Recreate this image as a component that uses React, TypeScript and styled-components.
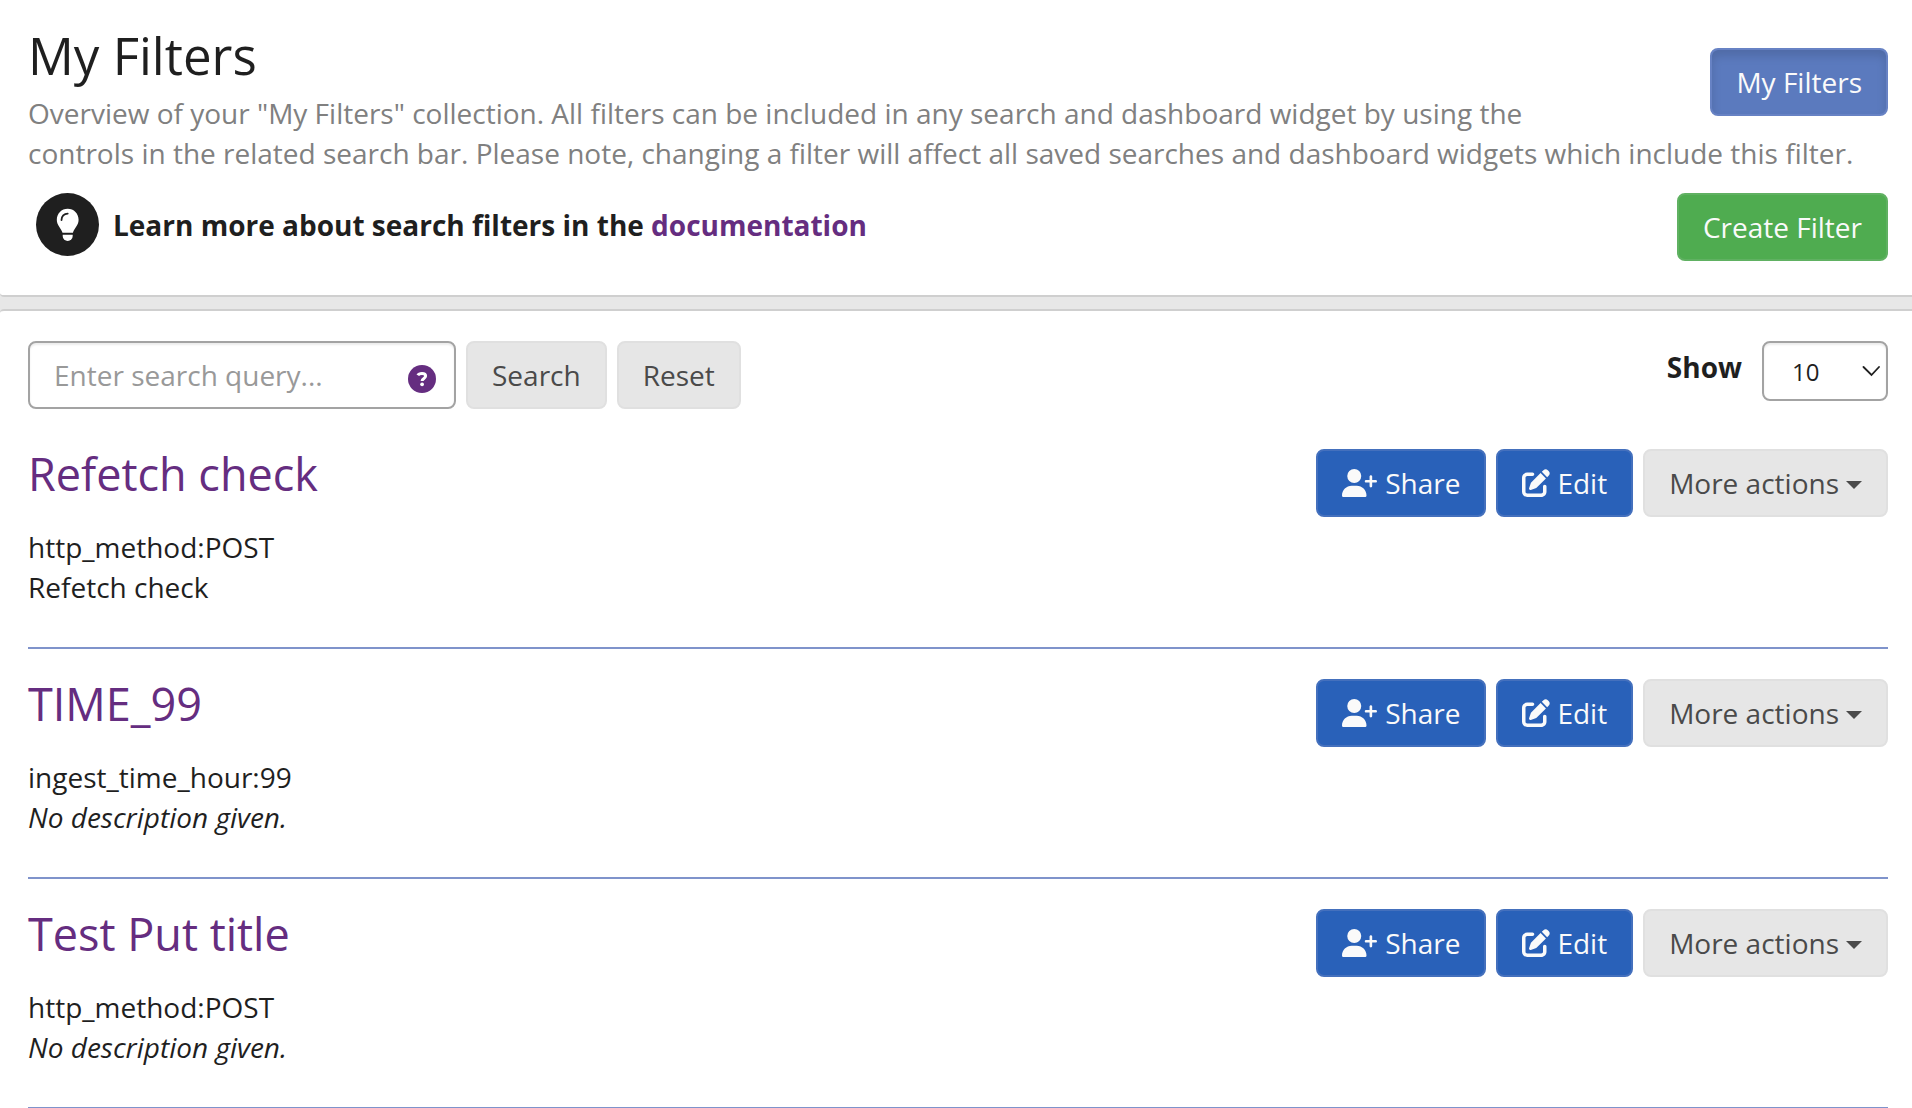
import React from 'react';
import styled, { createGlobalStyle, css } from 'styled-components';

const Global = createGlobalStyle`
  *, *::before, *::after { box-sizing: border-box; }
  body {
    margin: 0;
    background: #e7e7e7;
    color: #1f1f1f;
    font-family: "Open Sans", "Noto Sans", sans-serif;
    font-size: 28px;
    line-height: 40px;
    overflow: hidden;
  }
  button, input, select { font: inherit; margin: 0; }
`;

const Page = styled.main`
  display: flex;
  flex-direction: column;
  gap: 12px;
  min-height: 100vh;
`;

const Panel = styled.section<{ $first?: boolean }>`
  background: #fff;
  border: 2px solid #cfcfcf;
  border-width: ${(p) => (p.$first ? '0 0 2px' : '2px 0 0')};
  border-radius: ${(p) => (p.$first ? '0 0 0 4px' : '4px 0 0 0')};
  padding: ${(p) => (p.$first ? '28px 24px 34px 28px' : '30px 24px 0 28px')};
`;

const Corner = styled.div`
  float: right;
  padding-top: 20px;
`;

const PageTitle = styled.h1`
  margin: 0;
  font-size: 51px;
  font-weight: 400;
  line-height: 54px;
`;

const Lead = styled.p`
  margin: 11px 0 20px;
  color: #808080;
`;

const LearnRow = styled.div`
  display: flex;
  align-items: flex-start;
  justify-content: space-between;
`;

const Learn = styled.strong`
  display: flex;
  align-items: center;
  gap: 14px;
  padding-left: 8px;
  font-weight: 700;
`;

const Link = styled.a`
  color: #652d80;
  text-decoration: none;
`;

const tones = {
  gray: css`background: #e6e6e6; border-color: #e0e0e0; color: #4a4a4a;`,
  blue: css`background: #2961b9; border-color: #4470bd; color: #fafafa;`,
  green: css`background: #4fac50; border-color: #60b162; color: #fafafa;`,
  active: css`
    background: #5b7abe;
    border-color: #6782c4;
    color: #fafafa;
    box-shadow: inset 0 6px 10px rgba(0, 0, 0, 0.125);
  `,
};

const Button = styled.button<{ $tone: keyof typeof tones }>`
  display: inline-flex;
  align-items: center;
  gap: 7px;
  height: 68px;
  padding: 0 24px;
  border: 2px solid;
  border-radius: 8px;
  white-space: nowrap;
  cursor: pointer;
  ${(p) => tones[p.$tone]}
`;

const Toolbar = styled.div`
  display: flex;
  align-items: flex-start;
  justify-content: space-between;
`;

const SearchForm = styled.form`
  display: flex;
  gap: 10px;
`;

const SearchBox = styled.div`
  display: flex;
  align-items: center;
  width: 428px;
  height: 68px;
  padding: 0 18px 0 24px;
  border: 2px solid #a3a3a3;
  border-radius: 8px;
  background: #fff;
  box-shadow: inset 0 2px 2px rgba(0, 0, 0, 0.075);
`;

const SearchInput = styled.input`
  flex: 1;
  min-width: 0;
  padding: 0;
  border: 0;
  outline: 0;
  background: transparent;
  color: #1f1f1f;
  &::placeholder { color: #999; opacity: 1; }
`;

const HelpButton = styled.button`
  display: flex;
  padding: 8px 0 0;
  border: 0;
  background: none;
  cursor: pointer;
`;

const PageSize = styled.div`
  display: flex;
  align-items: flex-start;
  gap: 20px;
`;

const SizeLabel = styled.label`
  padding-top: 6px;
  font-weight: 700;
`;

const SelectBox = styled.div`
  display: grid;
  align-items: center;
  & > * { grid-area: 1 / 1; }
  & > svg { justify-self: end; margin-right: 8px; pointer-events: none; }
`;

const SizeSelect = styled.select`
  appearance: none;
  width: 126px;
  height: 60px;
  padding: 2px 28px 0;
  border: 2px solid #a3a3a3;
  border-radius: 8px;
  background: #fff;
  color: #1f1f1f;
  font-size: 24px;
  box-shadow: inset 0 2px 2px rgba(0, 0, 0, 0.075);
`;

const FilterList = styled.ul`
  margin: 10px 0 0;
  padding: 0;
  list-style: none;
`;

const FilterItem = styled.li`
  display: flex;
  align-items: flex-start;
  justify-content: space-between;
  padding: 30px 0 40px;
  border-bottom: 2px solid #7f93cb;
`;

const FilterTitle = styled.h2`
  margin: 0 0 28px;
  font-size: 45px;
  font-weight: 400;
  line-height: 50px;
`;

const Line = styled.div<{ $italic?: boolean }>`
  font-style: ${(p) => (p.$italic ? 'italic' : 'normal')};
`;

const Actions = styled.div`
  display: flex;
  gap: 10px;
`;

const Bulb = () => (
  <svg width="63" height="63" viewBox="0 0 63 63" aria-hidden="true">
    <circle cx="31.500" cy="31.500" r="31.500" fill="#1f1f1f" />
    <path fill="#fff" d="M31.700 15.700c-6.200 0-10.900 4.900-10.900 11 0 5.600 4.200 8.300 5.700 13h10.400c1.500-4.700 5.700-7.400 5.700-13 0-6.100-4.700-11-10.900-11z" />
    <path fill="#fff" d="M26.700 41.800h10v1.200a5 5 0 0 1-10 0z" />
    <path fill="none" stroke="#1f1f1f" strokeWidth="1.800" strokeLinecap="round" d="M25.500 27c0-3.600 2.600-6.400 6.200-6.400" />
  </svg>
);

const Help = () => (
  <svg width="28" height="28" viewBox="0 0 28 28" aria-hidden="true">
    <circle cx="14" cy="14" r="14" fill="#652d80" />
    <path
      fill="none"
      stroke="#fff"
      strokeWidth="3"
      strokeLinejoin="round"
      d="M9.800 10.200C10.600 8.800 12.200 8.400 14 8.400c2.200 0 3.600.9 3.600 2.700 0 2.400-3.500 2.300-3.500 5"
    />
    <circle cx="14.100" cy="19.300" r="1.900" fill="#fff" />
  </svg>
);

const UserPlus = () => (
  <svg width="36" height="28" viewBox="0 0 640 512" preserveAspectRatio="xMinYMid" aria-hidden="true">
    <path fill="currentColor" d="M96 128a128 128 0 1 1 256 0A128 128 0 1 1 96 128zM0 482.300C0 383.800 79.800 304 178.300 304h91.400C368.200 304 448 383.800 448 482.300c0 16.400-13.300 29.700-29.700 29.700H29.700C13.300 512 0 498.700 0 482.300zM504 312V248H440c-13.300 0-24-10.700-24-24s10.700-24 24-24h64V136c0-13.300 10.700-24 24-24s24 10.700 24 24v64h64c13.300 0 24 10.700 24 24s-10.700 24-24 24H552v64c0 13.300-10.700 24-24 24s-24-10.700-24-24z" />
  </svg>
);

const PenSquare = () => (
  <svg width="28" height="28" viewBox="0 0 512 512" aria-hidden="true">
    <path fill="currentColor" d="M471.600 21.700c-21.900-21.900-57.300-21.900-79.200 0L362.300 51.700l97.900 97.900 30.100-30.100c21.900-21.900 21.900-57.300 0-79.200L471.600 21.700zm-299.200 220c-6.100 6.100-10.800 13.600-13.500 21.900l-29.600 88.800c-2.900 8.600-.600 18.100 5.800 24.600s15.900 8.700 24.600 5.800l88.800-29.600c8.200-2.700 15.700-7.400 21.900-13.500L437.700 172.300 339.700 74.300 172.400 241.700zM96 64C43 64 0 107 0 160V416c0 53 43 96 96 96H352c53 0 96-43 96-96V320c0-17.700-14.300-32-32-32s-32 14.300-32 32v96c0 17.700-14.300 32-32 32H96c-17.700 0-32-14.300-32-32V160c0-17.700 14.300-32 32-32h96c17.700 0 32-14.300 32-32s-14.300-32-32-32H96z" />
  </svg>
);

const Caret = () => (
  <svg width="16" height="12" viewBox="0 0 16 12" aria-hidden="true">
    <path fill="currentColor" d="M0 4h16l-8 8z" />
  </svg>
);

const Chevron = () => (
  <svg width="18" height="12" viewBox="0 0 18 12" aria-hidden="true">
    <path fill="none" stroke="#1f1f1f" strokeWidth="1.800" strokeLinecap="round" d="M1.500 2L9.500 10 17 2" />
  </svg>
);

const filters = [
  { title: 'Refetch check', query: 'http_method:POST', description: 'Refetch check' },
  { title: 'TIME_99', query: 'ingest_time_hour:99', description: '' },
  { title: 'Test Put title', query: 'http_method:POST', description: '' },
];

export default function App() {
  return (
    <Page>
      <Global />
      <Panel $first>
        <Corner>
          <Button type="button" $tone="active">My Filters</Button>
        </Corner>
        <PageTitle>My Filters</PageTitle>
        <Lead>
          Overview of your "My Filters" collection. All filters can be included in any search and
          dashboard widget by using the
          <br />
          controls in the related search bar. Please note, changing a filter will affect all saved
          searches and dashboard widgets which include this filter.
        </Lead>
        <LearnRow>
          <Learn>
            <Bulb />
            <span>
              Learn more about search filters in the <Link href="#documentation">documentation</Link>
            </span>
          </Learn>
          <Button type="button" $tone="green">Create Filter</Button>
        </LearnRow>
      </Panel>
      <Panel>
        <Toolbar>
          <SearchForm onSubmit={(e) => e.preventDefault()}>
            <SearchBox>
              <SearchInput type="text" aria-label="Search query" placeholder="Enter search query..." />
              <HelpButton type="button" aria-label="Search syntax help">
                <Help />
              </HelpButton>
            </SearchBox>
            <Button type="submit" $tone="gray">Search</Button>
            <Button type="reset" $tone="gray">Reset</Button>
          </SearchForm>
          <PageSize>
            <SizeLabel htmlFor="page-size">Show</SizeLabel>
            <SelectBox>
              <SizeSelect id="page-size" defaultValue="10">
                <option>10</option>
                <option>50</option>
                <option>100</option>
              </SizeSelect>
              <Chevron />
            </SelectBox>
          </PageSize>
        </Toolbar>
        <FilterList>
          {filters.map((f) => (
            <FilterItem key={f.title}>
              <div>
                <FilterTitle>
                  <Link href="#filter">{f.title}</Link>
                </FilterTitle>
                <Line>{f.query}</Line>
                <Line $italic={!f.description}>{f.description || 'No description given.'}</Line>
              </div>
              <Actions>
                <Button type="button" $tone="blue"><UserPlus />Share</Button>
                <Button type="button" $tone="blue"><PenSquare />Edit</Button>
                <Button type="button" $tone="gray">More actions<Caret /></Button>
              </Actions>
            </FilterItem>
          ))}
        </FilterList>
      </Panel>
    </Page>
  );
}
